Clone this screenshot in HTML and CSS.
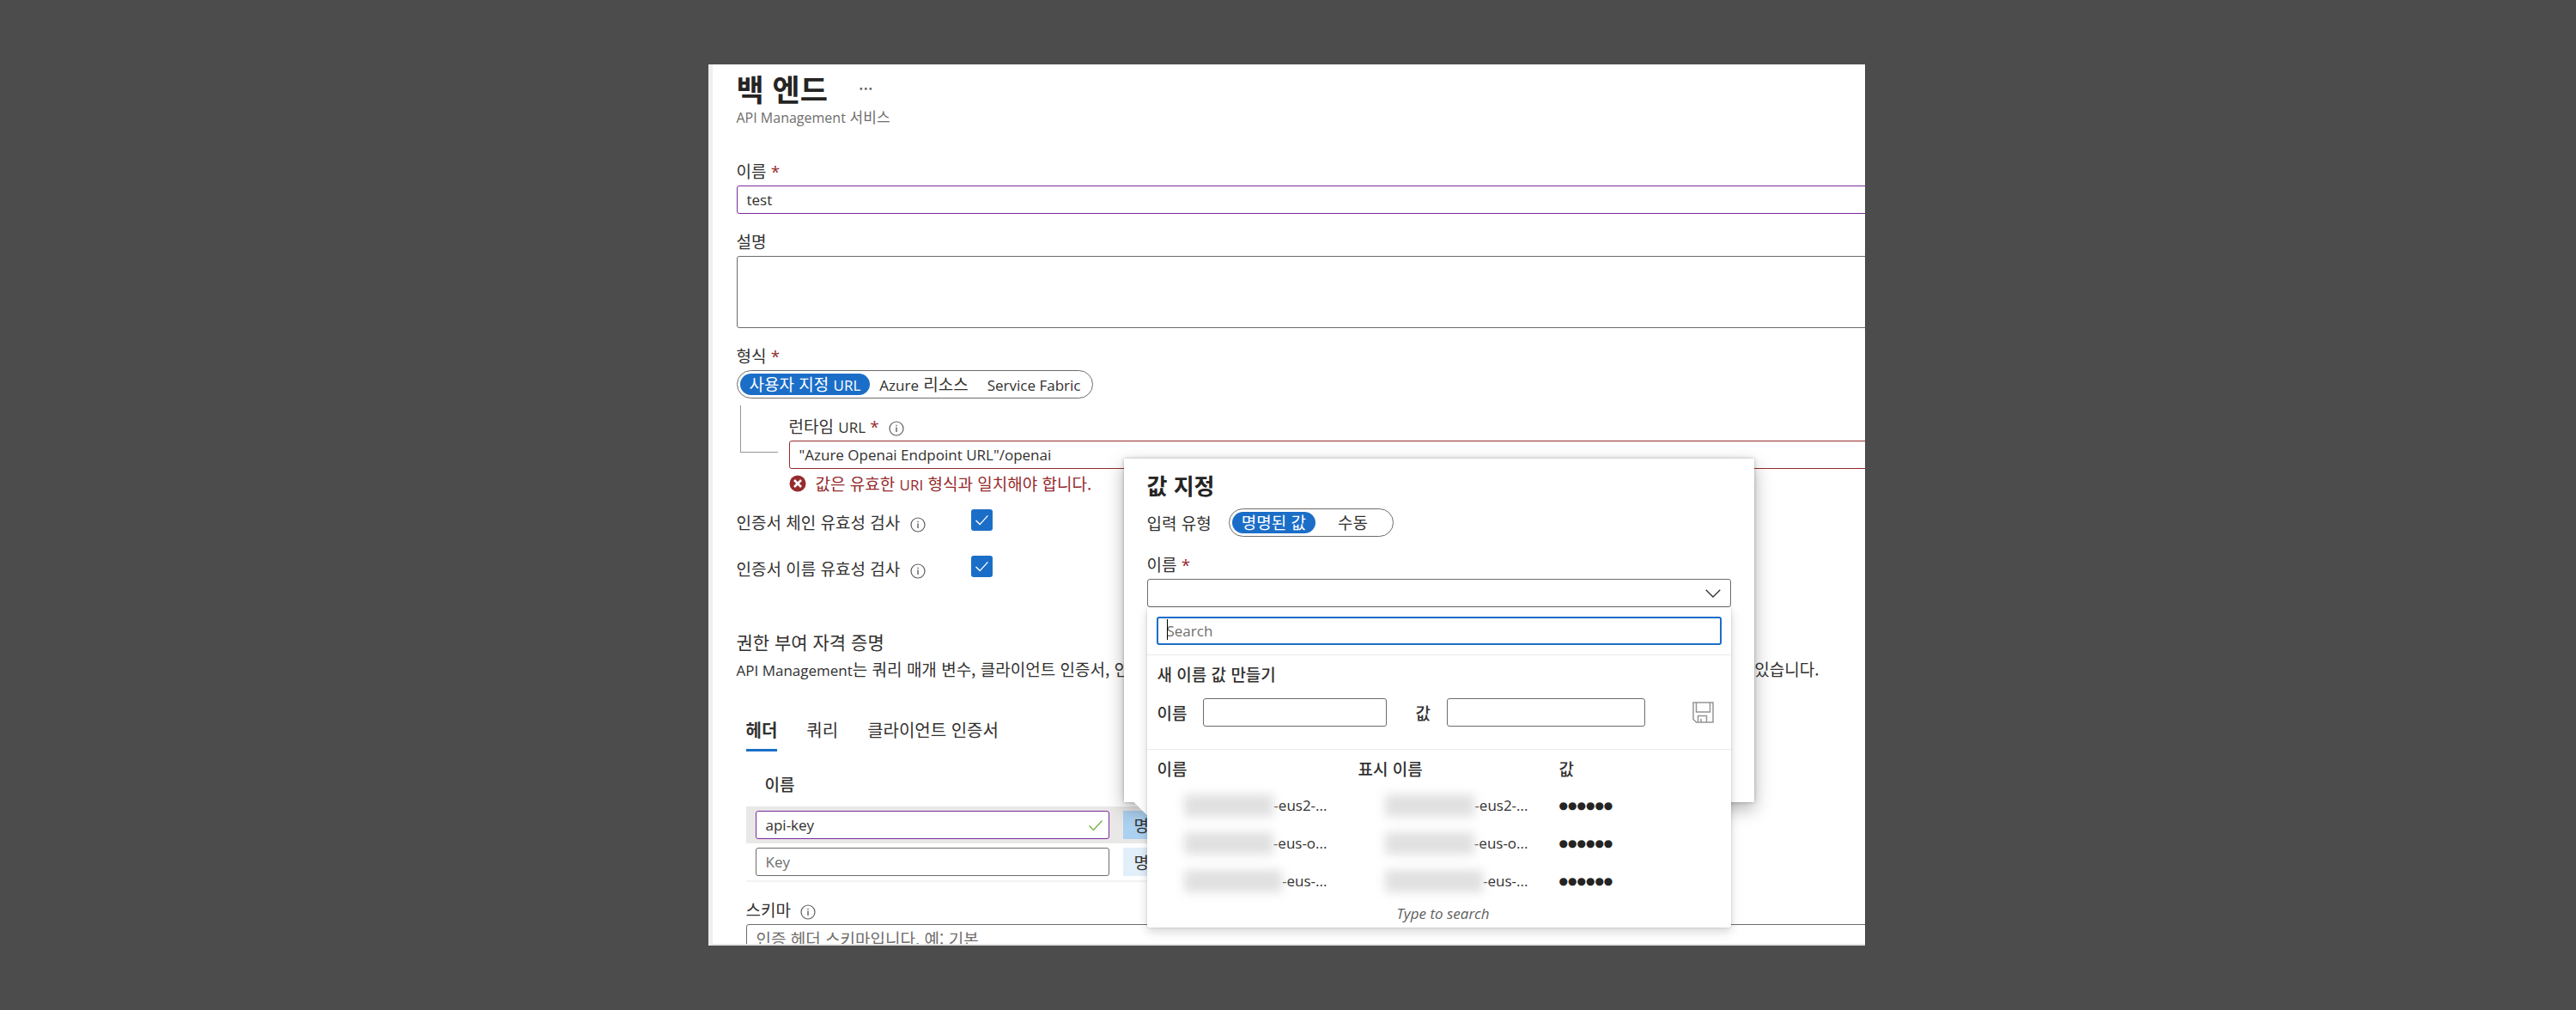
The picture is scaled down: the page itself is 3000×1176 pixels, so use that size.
FILE: index.html
```html
<!doctype html>
<html lang="ko">
<head>
  <meta charset="utf-8">
  <title>백 엔드 - API Management 서비스</title>
  <link rel="stylesheet" href="styles.css">
</head>
<body>
<svg class="sprite" aria-hidden="true">
  <symbol id="info" viewBox="0 0 18 18">
    <circle cx="9" cy="9" r="8" fill="none" stroke="currentColor" stroke-width="1.2"/>
    <path d="M9 7.6v5.4M9 4.8v1.4" stroke="currentColor" stroke-width="1.4"/>
  </symbol>
  <symbol id="check" viewBox="0 0 18 14">
    <path d="M1.5 7.5l5 5L16.500 1.500" fill="none" stroke="currentColor" stroke-width="1.5"/>
  </symbol>
</svg>

<main class="blade">
  <header class="title">
    <h1>백 엔드</h1>
    <button class="more" aria-label="더 보기">···</button>
  </header>
  <p class="subtitle"><span class="en">API Management</span> 서비스</p>

  <form class="form">
    <div class="field">
      <label for="name">이름 <span class="req">*</span></label>
      <input id="name" class="box dirty" type="text" value="test">
    </div>
    <div class="field">
      <label for="desc">설명</label>
      <textarea id="desc" class="box"></textarea>
    </div>
    <div class="field">
      <span class="label">형식 <span class="req">*</span></span>
      <div class="pills">
        <label><input type="radio" name="type" checked><span>사용자 지정 <span class="en">URL</span></span></label>
        <label><input type="radio" name="type"><span><span class="en">Azure</span> 리소스</span></label>
        <label><input type="radio" name="type"><span><span class="en">Service Fabric</span></span></label>
      </div>
    </div>

    <div class="child">
      <div class="elbow"></div>
      <div class="child-field">
        <label for="url">런타임 <span class="en">URL</span> <span class="req">*</span> <svg class="info"><use href="#info"/></svg></label>
        <input id="url" class="box invalid" type="text" value="&quot;Azure Openai Endpoint URL&quot;/openai">
        <p class="error">
          <svg viewBox="0 0 20 20"><circle cx="10" cy="10" r="9.500" fill="#962b2d"/><path d="M6 6l8 8M14 6l-8 8" stroke="#fff" stroke-width="2.600"/></svg>
          <span>값은 유효한 <span class="en">URI</span> 형식과 일치해야 합니다.</span>
        </p>
      </div>
    </div>

    <div class="check-row">
      <label for="chain">인증서 체인 유효성 검사 <svg class="info"><use href="#info"/></svg></label>
      <span class="check"><input id="chain" type="checkbox" checked><svg><use href="#check"/></svg></span>
    </div>
    <div class="check-row">
      <label for="cname">인증서 이름 유효성 검사 <svg class="info"><use href="#info"/></svg></label>
      <span class="check"><input id="cname" type="checkbox" checked><svg><use href="#check"/></svg></span>
    </div>

    <h2>권한 부여 자격 증명</h2>
    <p class="about"><span><span class="en">API Management</span>는 쿼리 매개 변수, 클라이언트 인증서, 인증</span><span>수 있습니다.</span></p>

    <div class="creds">
      <nav class="tabs">
        <a class="active" href="#header">헤더</a>
        <a href="#query">쿼리</a>
        <a href="#cert">클라이언트 인증서</a>
      </nav>
      <table class="keys">
        <thead>
          <tr><th>이름</th><th></th></tr>
        </thead>
        <tbody>
          <tr class="current">
            <td><div class="key"><input class="box dirty" type="text" value="api-key" aria-label="이름"><svg><use href="#check"/></svg></div></td>
            <td><button type="button" class="value on">명명된 값</button></td>
          </tr>
          <tr>
            <td><div class="key"><input class="box" type="text" placeholder="Key" aria-label="이름"></div></td>
            <td><button type="button" class="value">명명된 값</button></td>
          </tr>
        </tbody>
      </table>
      <div class="schema">
        <label for="schema">스키마 <svg class="info"><use href="#info"/></svg></label>
        <input id="schema" class="box ko" type="text" placeholder="인증 헤더 스키마입니다. 예: 기본">
      </div>
    </div>
  </form>

  <section class="callout">
    <h3>값 지정</h3>
    <div class="input-type">
      <span>입력 유형</span>
      <div class="pills wide">
        <label><input type="radio" name="kind" checked><span>명명된 값</span></label>
        <label><input type="radio" name="kind"><span>수동</span></label>
      </div>
    </div>
    <label class="label" for="named">이름 <span class="req">*</span></label>
    <div class="combo">
      <select id="named" class="box"><option></option></select>
      <svg class="chevron" viewBox="0 0 18 10"><path d="M.7.7L9 9 17.300.7" fill="none" stroke="#323130" stroke-width="1.3"/></svg>

      <div class="dropdown">
        <div class="search">
          <input class="box" type="text" placeholder="Search" aria-label="Search">
          <i class="caret"></i>
        </div>
        <div class="create">
          <h4>새 이름 값 만들기</h4>
          <div class="create-row">
            <label for="newname">이름</label>
            <input id="newname" class="box" type="text">
            <label for="newvalue">값</label>
            <input id="newvalue" class="box" type="text">
            <button type="button" class="save" aria-label="저장">
              <svg viewBox="0 0 25 25" fill="none" stroke="#979593" stroke-width="1.5"><path d="M1 1h23v23H4.500L1 20.500z"/><path d="M4.500 1v11h16V1"/><path d="M6.500 24v-7.500h10V24M10 24v-4"/></svg>
            </button>
          </div>
        </div>
        <table class="values">
          <thead>
            <tr><th>이름</th><th>표시 이름</th><th>값</th></tr>
          </thead>
          <tbody>
            <tr>
              <td><div class="masked"><i></i>-eus2-...</div></td>
              <td><div class="masked"><i></i>-eus2-...</div></td>
              <td class="dots">●●●●●●</td>
            </tr>
            <tr>
              <td><div class="masked"><i></i>-eus-o...</div></td>
              <td><div class="masked"><i></i>-eus-o...</div></td>
              <td class="dots">●●●●●●</td>
            </tr>
            <tr>
              <td><div class="masked"><i class="long"></i>-eus-...</div></td>
              <td><div class="masked"><i class="long"></i>-eus-...</div></td>
              <td class="dots">●●●●●●</td>
            </tr>
          </tbody>
        </table>
        <p class="hint">Type to search</p>
      </div>
    </div>
  </section>
</main>
</body>
</html>
```
FILE: styles.css
```css
:root {
  --fg: #323130;
  --blue: #1b6ec8;
  --purple: #7a2a9c;
  --red: #962b2d;
  --line: #6e6c6a;
  --latin: "Open Sans", "Noto Sans CJK KR", sans-serif;
}
* {
  box-sizing: border-box;
  margin: 0;
  padding: 0;
}
body {
  background: #4c4c4c;
  color: var(--fg);
  font: 19px/24px "Noto Sans CJK KR", sans-serif;
  padding: 75px 4px 75px 0;
  overflow: hidden;
}
.sprite {
  position: absolute;
  width: 0;
  height: 0;
}
.en {
  font-family: var(--latin);
  font-size: 17px;
  line-height: 1;
}
.req {
  color: var(--red);
  font-family: var(--latin);
  line-height: 1;
}
button {
  border: none;
  background: none;
  font: inherit;
  color: inherit;
}

.blade {
  position: relative;
  width: 100%;
  max-width: 1347px;
  height: calc(100vh - 150px);
  margin: 0 auto;
  padding: 7px 0 0 28px;
  overflow: hidden;
  background: #fff;
  border-left: 5px solid #f0eeee;
  border-bottom: 2px solid #e4e4e4;
}
.title {
  display: flex;
  align-items: center;
  gap: 36px;
}
.title h1 {
  font-size: 35px;
  line-height: 42px;
  font-weight: 700;
  color: #252423;
}
.more {
  font-size: 20px;
  color: #605e5c;
}
.subtitle {
  font-size: 17px;
  color: #706e6c;
  margin-bottom: 39px;
}
.subtitle .en {
  font-size: 16px;
}

/* form controls */
.box {
  display: block;
  width: 100%;
  height: 33px;
  padding: 0 11px;
  border: 1px solid var(--line);
  border-radius: 3px;
  background: #fff;
  color: var(--fg);
  font: 17px/24px var(--latin);
  outline: none;
}
.box::placeholder {
  color: #706e6c;
  opacity: 1;
}
.box.ko {
  font-family: "Noto Sans CJK KR", sans-serif;
  font-size: 19px;
}
textarea.box {
  height: 84px;
  resize: none;
}
.box.dirty {
  border-color: var(--purple);
}
.box.invalid {
  border-color: var(--red);
}
.form .box {
  min-width: 0;
}
.field {
  margin-bottom: 20px;
  margin-right: -10px;
}
.field > label, .field > .label, .child-field > label, .schema > label {
  display: block;
  height: 24px;
  margin-bottom: 5px;
}
.info {
  width: 18px;
  height: 18px;
  margin-left: 6px;
  vertical-align: -4px;
  color: #605e5c;
}

.pills {
  display: inline-flex;
  height: 33px;
  padding: 3px;
  border: 1px solid var(--line);
  border-radius: 17px;
  vertical-align: top;
}
.pills label {
  position: relative;
  display: flex;
}
.pills input {
  position: absolute;
  opacity: 0;
}
.pills label > span {
  padding: 0 11px;
  border-radius: 13px;
}
.pills input:checked + span {
  background: var(--blue);
  color: #fff;
}
.pills.wide label:last-child > span {
  padding: 0 26px;
}

.child {
  display: flex;
  margin: -12px -10px 18px 4px;
}
.elbow {
  width: 44px;
  height: 55px;
  margin-right: 13px;
  border-left: 1px solid #979593;
  border-bottom: 1px solid #979593;
}
.child-field {
  flex: 1;
  padding-top: 12px;
}
.error {
  display: flex;
  align-items: center;
  gap: 11px;
  height: 24px;
  margin-top: 5px;
  color: var(--red);
}
.error svg {
  width: 20px;
  height: 20px;
}

.check-row {
  display: flex;
  align-items: flex-start;
  height: 32px;
  margin-bottom: 22px;
}
.check-row label {
  width: 273px;
  line-height: 30px;
}
.check {
  display: grid;
  place-items: center;
}
.check > * {
  grid-area: 1 / 1;
}
.check input {
  appearance: none;
  width: 25px;
  height: 25px;
  border-radius: 3px;
  background: var(--blue);
}
.check svg {
  width: 17px;
  height: 13px;
  color: #fff;
  pointer-events: none;
}

h2 {
  margin: 56px 0 8px;
  font-size: 21px;
  line-height: 24px;
  font-weight: 400;
}
.about {
  display: flex;
  justify-content: space-between;
  height: 24px;
  margin-right: 53px;
  white-space: nowrap;
}

.creds {
  margin: 47px -10px 0 11px;
}
.tabs {
  display: flex;
  gap: 34px;
  font-size: 20px;
}
.tabs a {
  padding-bottom: 10px;
  border-bottom: 3px solid transparent;
  color: var(--fg);
  text-decoration: none;
}
.tabs .active {
  font-weight: 600;
  border-color: var(--blue);
}
.keys {
  width: 80%;
  margin: 26px 0 20px;
  border-collapse: collapse;
  border-bottom: 2px solid #f3f2f1;
}
.keys th {
  padding: 0 22px 14px;
  text-align: left;
  font-weight: 500;
}
.keys td {
  padding: 5px 11px;
}
.keys td:first-child {
  width: 434px;
}
.keys td:last-child {
  padding-left: 5px;
}
.current {
  background: #e9e8e7;
}
.key {
  display: flex;
  align-items: center;
  position: relative;
}
.key svg {
  position: absolute;
  right: 7px;
  width: 18px;
  height: 14px;
  color: #7ab648;
}
.value {
  display: block;
  height: 33px;
  padding: 0 13px;
  background: #e1effa;
}
.value.on {
  background: #abd0f0;
}

/* value callout and its dropdown */
.callout {
  position: absolute;
  left: 479px;
  top: 459px;
  width: 734px;
  min-height: 400px;
  padding: 15px 27px;
  background: #fff;
  box-shadow: 0 8px 20px rgba(0, 0, 0, .3), 0 0 4px rgba(0, 0, 0, .25);
}
.callout::before {
  content: "";
  position: absolute;
  left: 12px;
  bottom: -20px;
  width: 40px;
  height: 20px;
  background: #fff;
  clip-path: polygon(0 0, 100% 0, 50% 100%);
}
h3 {
  margin-bottom: 11px;
  font-size: 26px;
  line-height: 32px;
  font-weight: 600;
  color: #252423;
}
.input-type {
  display: flex;
  align-items: center;
  gap: 20px;
  margin-bottom: 20px;
}
.callout > .label {
  display: block;
  height: 24px;
  margin-bottom: 5px;
}
.combo {
  position: relative;
}
.combo select {
  appearance: none;
}
.chevron {
  position: absolute;
  right: 11px;
  top: 12px;
  width: 20px;
  height: 10px;
}
.dropdown {
  position: absolute;
  top: 100%;
  left: 0;
  right: 0;
  background: #fff;
  border-radius: 0 0 3px 3px;
  box-shadow: 0 5px 12px rgba(0, 0, 0, .16), 0 0 3px rgba(0, 0, 0, .16);
}
.search {
  position: relative;
  padding: 11px;
  border-bottom: 1px solid #edebe9;
}
.search .box {
  border: 2px solid var(--blue);
  padding: 0 10px;
}
.caret {
  position: absolute;
  left: 23px;
  top: 14px;
  width: 1px;
  height: 24px;
  background: #000;
}
.create {
  padding: 10px 12px 26px;
  border-bottom: 1px solid #edebe9;
}
.create h4 {
  margin-bottom: 16px;
  font-size: 19px;
  font-weight: 500;
}
.create-row {
  display: flex;
  align-items: center;
  font-weight: 500;
}
.create-row .box {
  width: 214px;
  margin: 0 33px 0 19px;
}
.create-row #newvalue {
  width: 231px;
  margin-right: 55px;
}
.save svg {
  display: block;
  width: 25px;
  height: 25px;
}
.values {
  width: 100%;
  border-collapse: collapse;
  table-layout: fixed;
}
.values th {
  height: 43px;
  padding-left: 12px;
  text-align: left;
  font-weight: 500;
}
.values th:nth-child(1), .values th:nth-child(2) {
  width: 234px;
}
.values td {
  height: 44px;
  padding-left: 12px;
}
.masked {
  display: flex;
  align-items: center;
  justify-content: flex-end;
  width: 198px;
  font: 17px/24px var(--latin);
}
.masked i {
  width: 104px;
  height: 26px;
  background: #e0e0e0;
  filter: blur(6px);
}
.masked .long {
  width: 114px;
}
.values .dots {
  font: 12px/24px "DejaVu Sans", sans-serif;
  color: #252423;
}
.hint {
  padding: 4px 0 4px 10px;
  text-align: center;
  font: italic 17px/24px var(--latin);
  color: #605e5c;
}
```
